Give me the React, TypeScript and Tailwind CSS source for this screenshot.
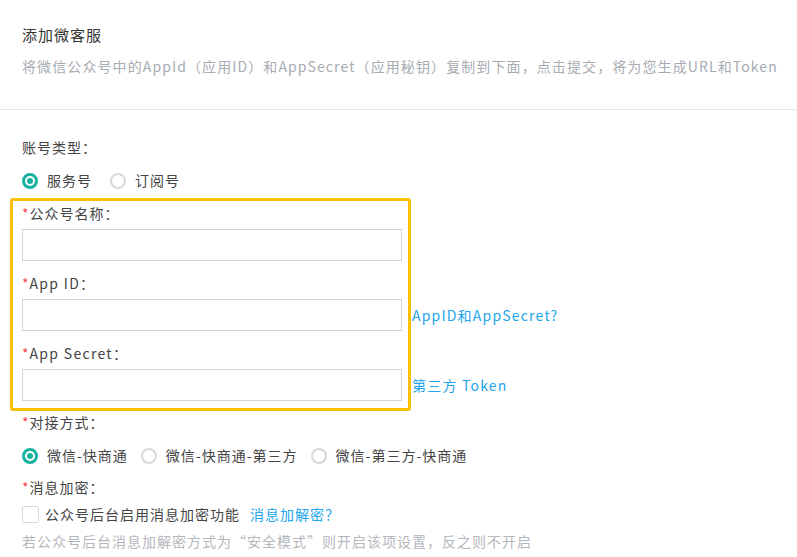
import React from 'react'

const font = { fontFamily: '"Noto Sans CJK SC", "Noto Sans", sans-serif' }

function Radio({ checked, label }: { checked?: boolean; label: string }) {
  return (
    <label className="flex items-center gap-[9px] text-[14px] tracking-[1px] text-[#444]">
      {checked ? (
        <span className="flex h-4 w-4 items-center justify-center rounded-full border-[3px] border-[#17b3a0]">
          <span className="h-[6px] w-[6px] rounded-full bg-[#17b3a0]" />
        </span>
      ) : (
        <span className="h-4 w-4 rounded-full border-[2px] border-[#d6d9dc]" />
      )}
      <span>{label}</span>
    </label>
  )
}

function Label({ children, required }: { children: React.ReactNode; required?: boolean }) {
  return (
    <div className="h-[20px] text-[14px] leading-[20px] tracking-[1px] text-[#444]">
      {required && <span className="text-[#f5454a]">*</span>}
      {children}
    </div>
  )
}

function Field({ label, hint }: { label: React.ReactNode; hint?: string }) {
  return (
    <div className="flex flex-col gap-[6px]">
      <Label required>{label}</Label>
      <div className="flex items-center">
        <input className="h-8 w-[380px] shrink-0 border border-[#d4d4d4] bg-white outline-none" />
        {hint && (
          <a href="#" className="ml-[10px] shrink-0 whitespace-nowrap text-[14px] tracking-[1.2px] text-[#21a5ec]">
            {hint}
          </a>
        )}
      </div>
    </div>
  )
}

export default function App() {
  return (
    <div className="h-[557px] w-[797px] overflow-hidden bg-white" style={font}>
      {/* Header */}
      <div className="border-b border-[#e8e8e8] px-[22px] pt-[24px] pb-[33px]">
        <h1 className="text-[15px] leading-[22px] tracking-[1px] text-[#333]">添加微客服</h1>
        <p className="mt-[10px] whitespace-nowrap text-[14px] leading-[20px] tracking-[1.1px] text-[#a7abb2]">
          将微信公众号中的AppId（应用ID）和AppSecret（应用秘钥）复制到下面，点击提交，将为您生成URL和Token
        </p>
      </div>

      {/* Form */}
      <div className="flex flex-col pt-[27px]">
        <div className="px-[22px]">
          <Label>账号类型：</Label>
          <div className="mt-[13px] flex items-center gap-[18px]">
            <Radio checked label="服务号" />
            <Radio label="订阅号" />
          </div>
        </div>

        <div className="mt-[7px] ml-[10px] flex w-[401px] flex-col gap-[12px] rounded-[3px] border-[3px] border-[#fcbf07] pt-[2px] pb-[7px] pl-[9px]">
          <Field label="公众号名称：" />
          <Field label={<><span className="tracking-[1.3px]">App ID</span>：</>} hint="AppID和AppSecret?" />
          <Field label={<><span className="tracking-[1.3px]">App Secret</span>：</>} hint="第三方 Token" />
        </div>

        <div className="px-[22px]">
          <div className="mt-[1px]">
            <Label required>对接方式：</Label>
          </div>
          <div className="mt-[13px] flex items-center gap-[13px]">
            <Radio checked label="微信-快商通" />
            <Radio label="微信-快商通-第三方" />
            <Radio label="微信-第三方-快商通" />
          </div>

          <div className="mt-[11px]">
            <Label required>消息加密：</Label>
          </div>
          <div className="mt-[7px] flex items-center text-[14px] tracking-[1px]">
            <span className="h-[17px] w-[17px] rounded-[2px] border border-[#d6d9dc] bg-white" />
            <span className="ml-[6px] text-[#444]">公众号后台启用消息加密功能</span>
            <a href="#" className="ml-[10px] text-[#21a5ec]">消息加解密？</a>
          </div>
          <p className="mt-[6px] text-[14px] leading-[20px] tracking-[1px] text-[#b4b7bc]">
            若公众号后台消息加解密方式为“安全模式”则开启该项设置，反之则不开启
          </p>
        </div>
      </div>
    </div>
  )
}
